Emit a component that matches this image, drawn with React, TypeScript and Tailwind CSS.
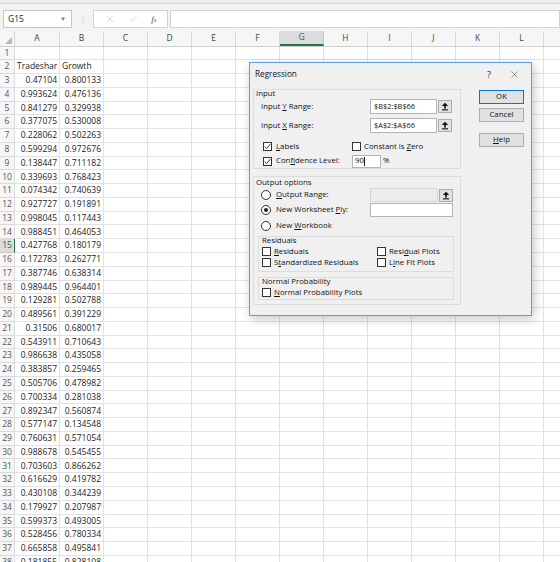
import { X, Check as CheckIcon } from "lucide-react";

const rows: [string, string][] = [
  ["0.47104", "0.800133"],
  ["0.993624", "0.476136"],
  ["0.841279", "0.329938"],
  ["0.377075", "0.530008"],
  ["0.228062", "0.502263"],
  ["0.599294", "0.972676"],
  ["0.138447", "0.711182"],
  ["0.339693", "0.768423"],
  ["0.074342", "0.740639"],
  ["0.927727", "0.191891"],
  ["0.998045", "0.117443"],
  ["0.988451", "0.464053"],
  ["0.427768", "0.180179"],
  ["0.172783", "0.262771"],
  ["0.387746", "0.638314"],
  ["0.989445", "0.964401"],
  ["0.129281", "0.502788"],
  ["0.489561", "0.391229"],
  ["0.31506", "0.680017"],
  ["0.543911", "0.710643"],
  ["0.986638", "0.435058"],
  ["0.383857", "0.259465"],
  ["0.505706", "0.478982"],
  ["0.700334", "0.281038"],
  ["0.892347", "0.560874"],
  ["0.577147", "0.134548"],
  ["0.760631", "0.571054"],
  ["0.988678", "0.545455"],
  ["0.703603", "0.866262"],
  ["0.616629", "0.419782"],
  ["0.430108", "0.344239"],
  ["0.179927", "0.207987"],
  ["0.599373", "0.493005"],
  ["0.528456", "0.780334"],
  ["0.665858", "0.495841"],
  ["0.181855", "0.828108"],
];

const cols = ["A", "B", "C", "D", "E", "F", "G", "H", "I", "J", "K", "L", ""];

export default function App() {
  return (
    <div className="relative w-[560px] h-[562px] overflow-hidden bg-white font-['Open_Sans',sans-serif] text-[#222]">
      {/* Top strip + formula bar */}
      <div className="h-[4px] bg-[#ececec] border-b border-[#d6d6d6]" />
      <div className="h-[27px] bg-[#f3f3f3] flex items-start pt-[6px]">
        <div className="ml-[3px] w-[69px] h-[18px] bg-white border border-[#c6c6c6] flex items-center justify-between pl-[4px] pr-[5px]">
          <span className="text-[8.5px] leading-none">G15</span>
          <span className="text-[6px] text-[#777] leading-none">▼</span>
        </div>
        <div className="w-[21px] h-[18px] flex items-center justify-center text-[#aaa] text-[8px]">⋮</div>
        <div className="w-[75px] h-[18px] bg-white border border-[#d4d4d4] flex items-center justify-around px-[4px] text-[#b0b0b0]">
          <X size={10} strokeWidth={1.2} />
          <CheckIcon size={10} strokeWidth={1.2} />
          <span className="font-['Liberation_Serif',serif] italic text-[9px] text-[#555] leading-none">
            f<span className="text-[6px]">x</span>
          </span>
        </div>
        <div className="ml-[2px] flex-1 h-[18px] bg-white border border-[#d4d4d4]" />
      </div>

      {/* Column headers */}
      <div className="flex h-[15.5px] bg-[#f6f6f6] border-b border-[#d0d0d0]">
        <div className="w-[15px] shrink-0 border-r border-[#d4d4d4] flex items-end justify-end pr-[2px] pb-[2px]">
          <svg width="7" height="7" viewBox="0 0 7 7">
            <polygon points="7,0 7,7 0,7" fill="#b8b8b8" />
          </svg>
        </div>
        {cols.map((c, i) => (
          <div
            key={i}
            className={`shrink-0 flex items-center justify-center text-[8.5px] ${i === 0 ? "w-[45px]" : "w-[44px]"} ${
              c === "G"
                ? "bg-[#dcdcdc] text-[#217346] border-b-2 border-[#217346] border-r border-r-[#c8c8c8]"
                : "text-[#444] border-r border-[#dadada]"
            }`}
          >
            {c}
          </div>
        ))}
      </div>

      {/* Grid rows */}
      {Array.from({ length: 38 }).map((_, r) => {
        const n = r + 1;
        const a = n === 2 ? "Tradeshar" : n >= 3 ? rows[n - 3][0] : "";
        const b = n === 2 ? "Growth" : n >= 3 ? rows[n - 3][1] : "";
        const sel = n === 15;
        return (
          <div key={n} className="flex h-[13.77px] text-[8.5px] leading-none">
            <div
              className={`w-[15px] shrink-0 flex items-center justify-center border-b border-r ${
                sel
                  ? "bg-[#dcdcdc] text-[#217346] border-b-[#c8c8c8] border-r-[#217346]"
                  : "bg-[#f6f6f6] text-[#555] border-[#dadada]"
              }`}
            >
              {n}
            </div>
            <div
              className={`w-[45px] shrink-0 flex items-center overflow-hidden whitespace-nowrap border-b border-r border-[#e2e2e2] ${
                n === 2 ? "justify-start pl-[2px]" : "justify-end pr-[2px]"
              }`}
            >
              {a}
            </div>
            <div
              className={`w-[44px] shrink-0 flex items-center overflow-hidden whitespace-nowrap border-b border-r border-[#e2e2e2] ${
                n === 2 ? "justify-start pl-[2px]" : "justify-end pr-[2px]"
              }`}
            >
              {b}
            </div>
            {cols.slice(2).map((c, i) => (
              <div key={i} className="w-[44px] shrink-0 border-b border-r border-[#e2e2e2]" />
            ))}
          </div>
        );
      })}

      {/* Regression dialog */}
      <div className="absolute left-[249px] top-[62px] w-[283px] h-[254px] bg-[#f0f0f0] border border-[#5b9fd8] shadow-[2px_3px_10px_rgba(0,0,0,0.22)] text-[7.8px] leading-none text-[#111]">
        <div className="h-[22px] flex items-center pl-[5px]">
          <span className="text-[8.2px]">Regression</span>
          <span className="ml-auto mr-[18px] text-[9px] text-[#222]">?</span>
          <X size={11} strokeWidth={1} className="mr-[11px] text-[#222]" />
        </div>
        <div className="flex pl-[3px]">
          {/* Left column */}
          <div className="w-[208px] shrink-0">
            {/* Input group */}
            <div className="mt-[4px] border border-[#dcdcdc]">
              <div className="-mt-[1px] h-[8px] leading-[8px] pl-[2px]">Input</div>
              <div className="mt-[2px] h-[15px] flex items-center">
                <span className="w-[116px] pl-[7px]">
                  Input <u>Y</u> Range:
                </span>
                <Field w="w-[67px]" text="$B$2:$B$66" />
                <RangeBtn />
              </div>
              <div className="mt-[4px] h-[15px] flex items-center">
                <span className="w-[116px] pl-[7px]">
                  Input <u>X</u> Range:
                </span>
                <Field w="w-[67px]" text="$A$2:$A$66" />
                <RangeBtn />
              </div>
              <div className="mt-[8px] h-[11px] flex items-center">
                <span className="w-[98px] pl-[9px] flex items-center gap-[4px]">
                  <Box on />
                  <span>
                    <u>L</u>abels
                  </span>
                </span>
                <span className="flex items-center gap-[3px]">
                  <Box />
                  <span>
                    Constant is <u>Z</u>ero
                  </span>
                </span>
              </div>
              <div className="mt-[2px] h-[14px] flex items-center">
                <span className="w-[98px] pl-[9px] flex items-center gap-[4px]">
                  <Box on />
                  <span>
                    Con<u>f</u>idence Level:
                  </span>
                </span>
                <div className="w-[29px] h-[13px] bg-white border border-[#b4b4b4] flex items-center pl-[2px]">
                  90<span className="w-px h-[9px] bg-[#111]" />
                </div>
                <span className="ml-[2px]">%</span>
              </div>
            </div>

            {/* Output options group */}
            <div className="mt-[7px] border border-[#dcdcdc] pb-[4px]">
              <div className="h-[10px] leading-[10px] pl-[2px]">Output options</div>
              <div className="mt-[1px] h-[14px] flex items-center">
                <span className="w-[116px] pl-[7px] flex items-center gap-[5px]">
                  <Radio />
                  <span>
                    <u>O</u>utput Range:
                  </span>
                </span>
                <div className="w-[68px] h-[14px] bg-[#ececec] border border-[#d6d6d6]" />
                <RangeBtn />
              </div>
              <div className="mt-[1px] h-[14px] flex items-center">
                <span className="w-[116px] pl-[7px] flex items-center gap-[5px]">
                  <Radio on />
                  <span>
                    New Worksheet <u>P</u>ly:
                  </span>
                </span>
                <div className="w-[83px] h-[14px] bg-white border border-[#b4b4b4]" />
              </div>
              <div className="mt-[3px] h-[12px] flex items-center pl-[7px] gap-[5px]">
                <Radio />
                <span>
                  New <u>W</u>orkbook
                </span>
              </div>
              {/* Residuals */}
              <div className="mt-[4px] ml-[4px] w-[196px] border border-[#dcdcdc] pb-[3px]">
                <div className="-mt-[1px] h-[8px] leading-[8px] pl-[3px]">Residuals</div>
                <div className="mt-[2px] h-[11px] flex items-center">
                  <span className="w-[118px] pl-[3px] flex items-center gap-[3px]">
                    <Box />
                    <span>
                      <u>R</u>esiduals
                    </span>
                  </span>
                  <span className="flex items-center gap-[3px]">
                    <Box />
                    <span>
                      Resi<u>d</u>ual Plots
                    </span>
                  </span>
                </div>
                <div className="h-[11px] flex items-center">
                  <span className="w-[118px] pl-[3px] flex items-center gap-[3px]">
                    <Box />
                    <span>
                      S<u>t</u>andardized Residuals
                    </span>
                  </span>
                  <span className="flex items-center gap-[3px]">
                    <Box />
                    <span>
                      L<u>i</u>ne Fit Plots
                    </span>
                  </span>
                </div>
              </div>
              {/* Normal probability */}
              <div className="mt-[5px] ml-[4px] w-[196px] border border-[#dcdcdc] pb-[1px]">
                <div className="-mt-[1px] h-[8px] leading-[8px] pl-[3px]">Normal Probability</div>
                <div className="mt-[2px] h-[11px] flex items-center pl-[3px] gap-[3px]">
                  <Box />
                  <span>
                    <u>N</u>ormal Probability Plots
                  </span>
                </div>
              </div>
            </div>
          </div>

          {/* Right buttons */}
          <div className="ml-[18px] flex flex-col">
            <Btn className="mt-[5px] border-[#0078d7]">OK</Btn>
            <Btn className="mt-[4px] border-[#adadad]">Cancel</Btn>
            <Btn className="mt-[11px] border-[#adadad]">
              <u>H</u>elp
            </Btn>
          </div>
        </div>
      </div>
    </div>
  );
}

function Field({ w, text }: { w: string; text: string }) {
  return (
    <div className={`${w} h-[15px] bg-white border border-[#b4b4b4] flex items-center pl-[3px] text-[7.4px]`}>
      {text}
    </div>
  );
}

function RangeBtn() {
  return (
    <div className="ml-[1px] w-[14px] h-[13px] bg-[#e1e1e1] border border-[#adadad] flex items-center justify-center">
      <svg width="8" height="9" viewBox="0 0 8 9">
        <polygon points="0.8,4 4,0.8 7.2,4" fill="#111" />
        <rect x="3.2" y="3.8" width="1.6" height="2.8" fill="#111" />
        <rect x="1" y="7.3" width="6" height="1.1" fill="#111" />
      </svg>
    </div>
  );
}

function Box({ on }: { on?: boolean }) {
  return (
    <span className="w-[9px] h-[9px] shrink-0 bg-white border border-[#333] flex items-center justify-center">
      {on && (
        <svg width="7" height="7" viewBox="0 0 7 7">
          <path d="M0.7 3.6 L2.7 5.6 L6.3 1.1" fill="none" stroke="#222" strokeWidth="0.9" />
        </svg>
      )}
    </span>
  );
}

function Radio({ on }: { on?: boolean }) {
  return (
    <span className="w-[10px] h-[10px] shrink-0 rounded-full bg-white border border-[#333] flex items-center justify-center">
      {on && <span className="w-[4px] h-[4px] rounded-full bg-[#222]" />}
    </span>
  );
}

function Btn({ className, children }: { className: string; children: React.ReactNode }) {
  return (
    <div
      className={`w-[45px] h-[14px] bg-[#e1e1e1] border flex items-center justify-center text-[7.8px] ${className}`}
    >
      {children}
    </div>
  );
}
